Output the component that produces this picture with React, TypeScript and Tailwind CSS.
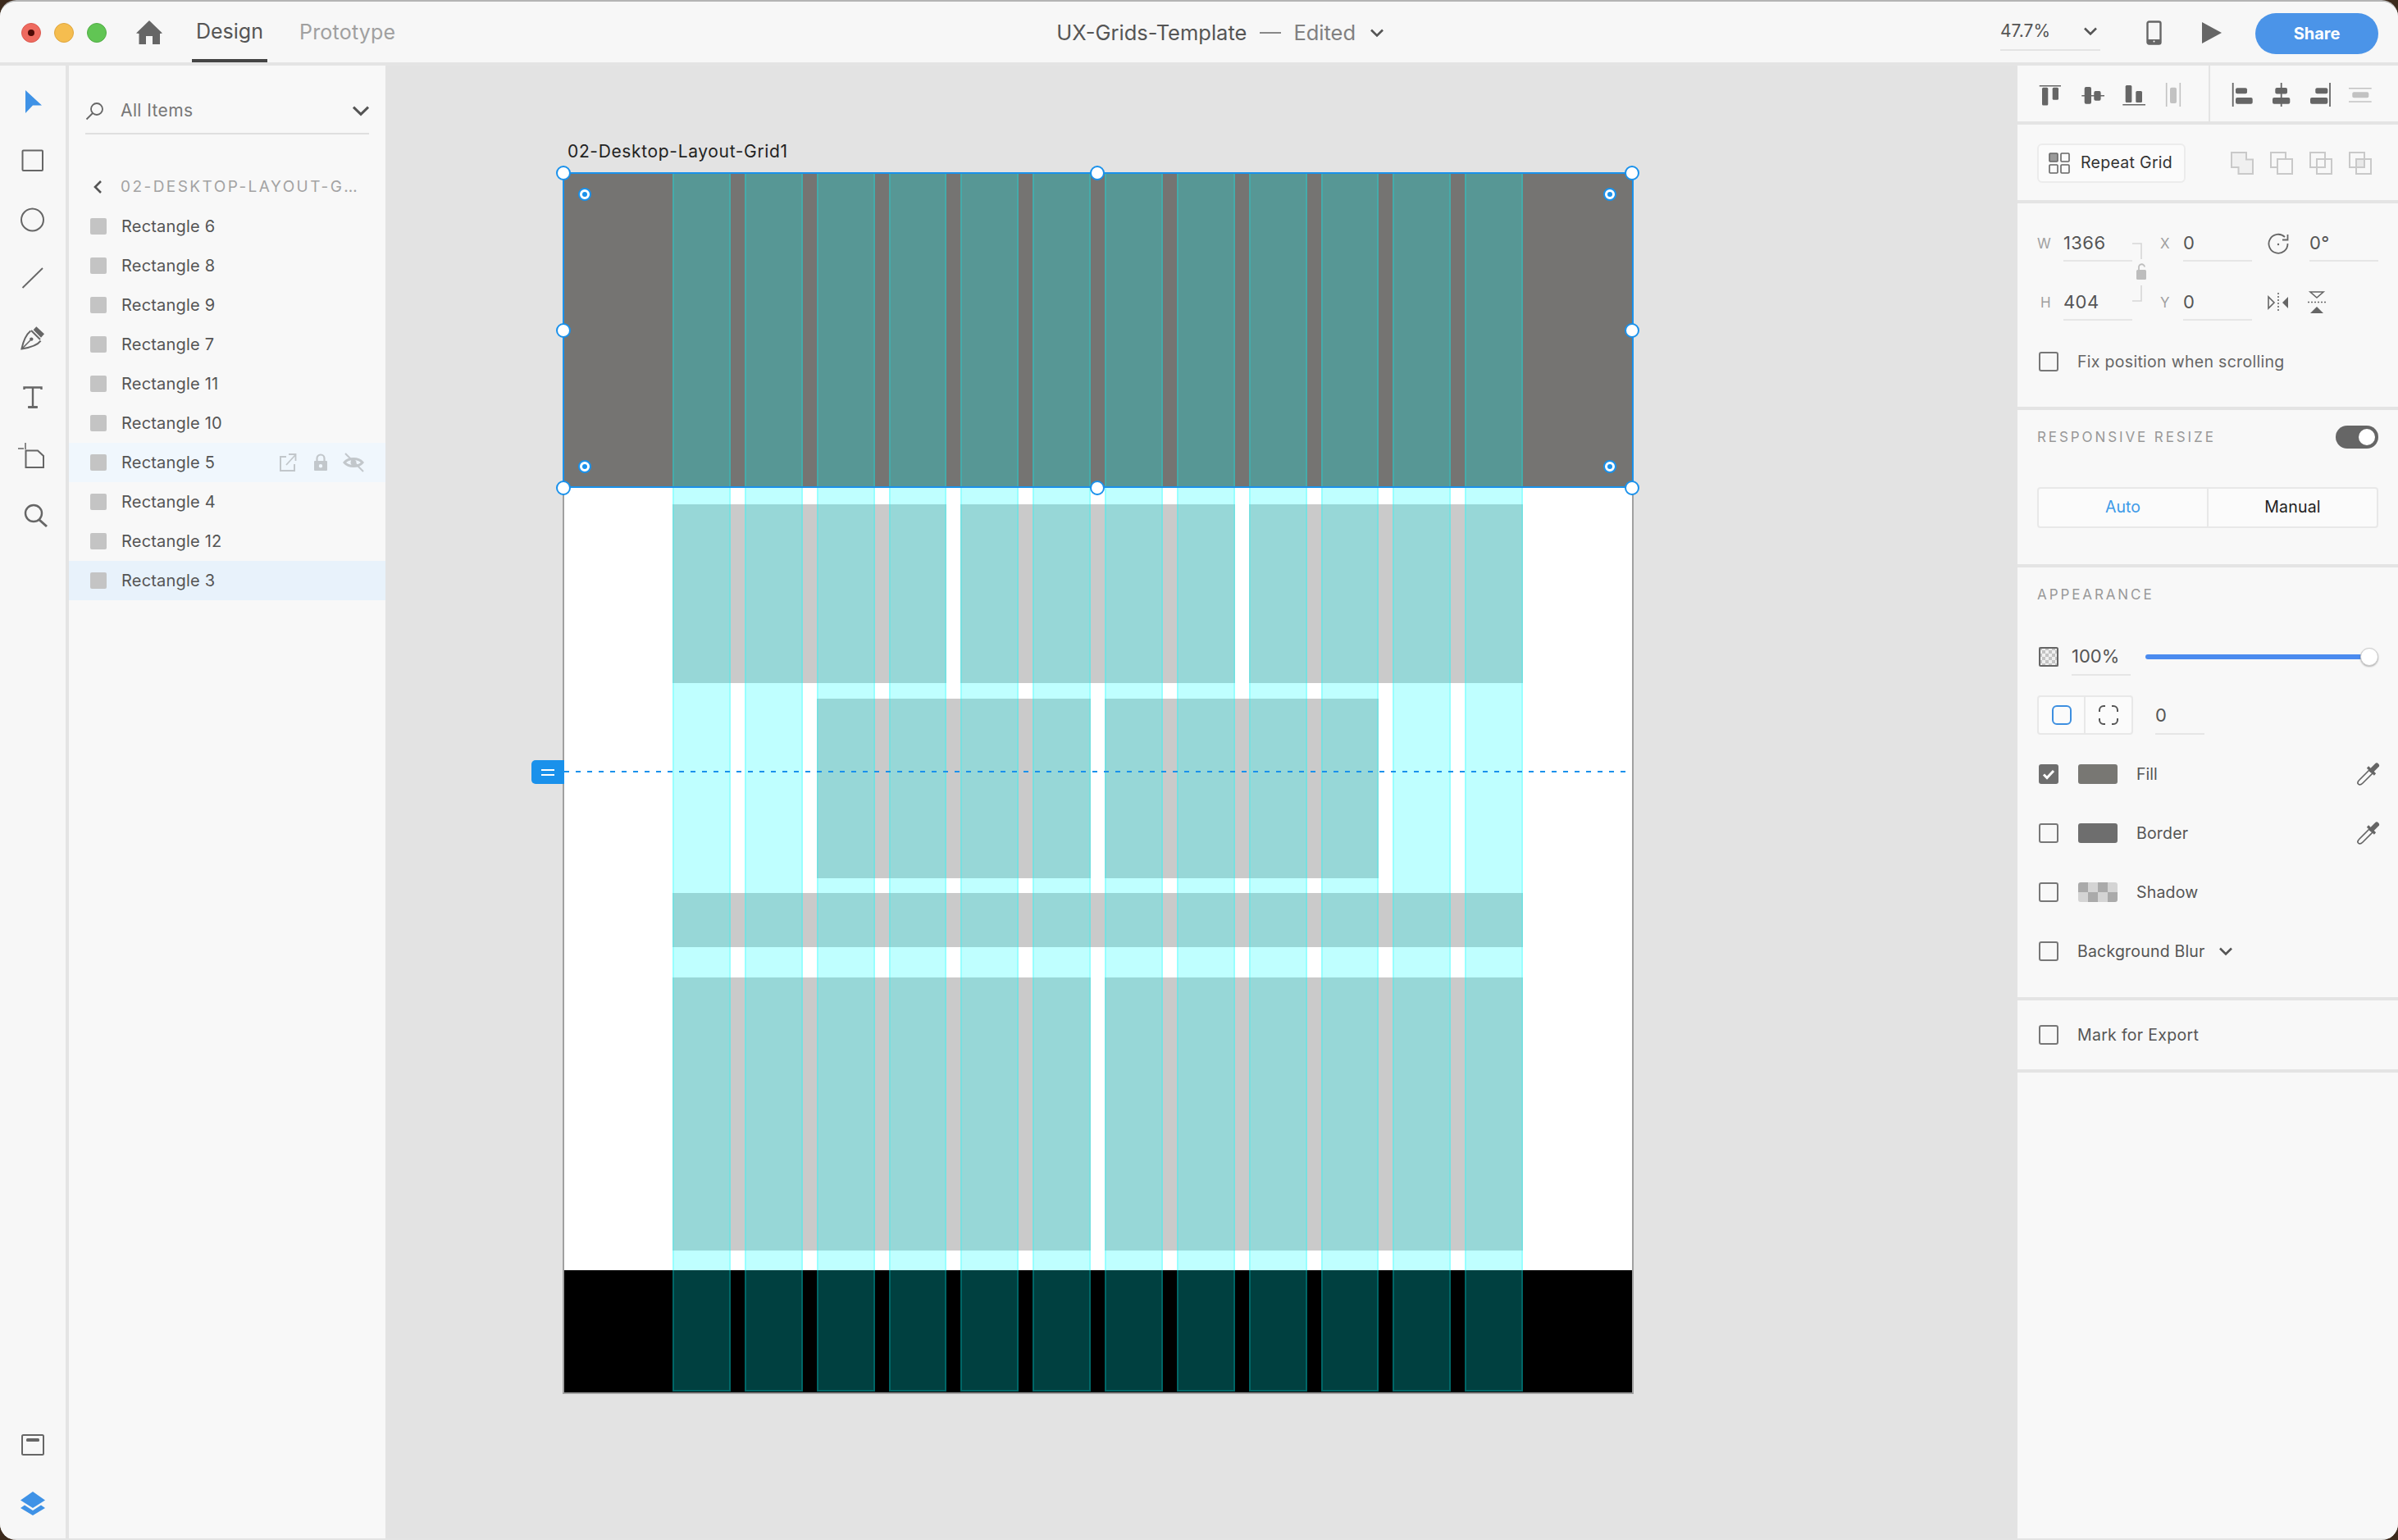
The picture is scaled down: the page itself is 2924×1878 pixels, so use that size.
import React from "react";

const GRAY = "#666666";
const layers = ["Rectangle 6","Rectangle 8","Rectangle 9","Rectangle 7","Rectangle 11","Rectangle 10","Rectangle 5","Rectangle 4","Rectangle 12","Rectangle 3"];

function Ic({ w = 40, h = 40, children, className = "" }: { w?: number; h?: number; children: React.ReactNode; className?: string }) {
  return <svg width={w} height={h} viewBox={`0 0 ${w} ${h}`} fill="none" className={"shrink-0 overflow-visible " + className}>{children}</svg>;
}

function Chevron({ size = 16, sw = 2.6, color = "#666" }: { size?: number; sw?: number; color?: string }) {
  return <Ic w={size} h={size}><path d={`M1 ${size * 0.28}L${size / 2} ${size * 0.72}L${size - 1} ${size * 0.28}`} stroke={color} strokeWidth={sw} /></Ic>;
}

function Tools() {
  const s = "#666";
  return (
    <div className="w-[80px] bg-[#f7f7f7] flex flex-col pt-[8px] shrink-0">
      <div className="h-[72px] flex items-center justify-center">
        <Ic><path d="M11 6V34L20 24.5L31 24.5Z" fill="#3f92e6" /></Ic>
      </div>
      <div className="h-[72px] flex items-center justify-center">
        <Ic><rect x="7.5" y="7.5" width="24.5" height="24.5" rx="1" stroke={s} strokeWidth="2" /></Ic>
      </div>
      <div className="h-[72px] flex items-center justify-center">
        <Ic><circle cx="19.5" cy="20" r="13.5" stroke={s} strokeWidth="2" /></Ic>
      </div>
      <div className="h-[72px] flex items-center justify-center">
        <Ic><path d="M7.5 31L32 7" stroke={s} strokeWidth="1.8" /></Ic>
      </div>
      <div className="h-[72px] flex items-center justify-center">
        <Ic>
          <path d="M24.3 6.3L34 15.3L30 19.7L20.7 10.3Z" fill={s} />
          <path d="M17.3 11.6C12 16 8 26 6.4 33.4C13 32.4 25 30 29.6 23.6" stroke={s} strokeWidth="2" />
          <path d="M7 33L17 23" stroke={s} strokeWidth="1.6" />
          <circle cx="18.3" cy="21.6" r="2.2" fill={s} />
          <path d="M18 11L29 22" stroke={s} strokeWidth="2" />
        </Ic>
      </div>
      <div className="h-[72px] flex items-center justify-center">
        <Ic>
          <path d="M9.5 11V8.5H30.5V11M20 8.5V32M15 32.5H25" stroke={s} strokeWidth="2.4" />
          <path d="M14 32.5H26" stroke={s} strokeWidth="2.6" />
        </Ic>
      </div>
      <div className="h-[72px] flex items-center justify-center">
        <Ic>
          <path d="M11.5 13.5H26L33 20V34H11.5Z" stroke={s} strokeWidth="2" />
          <path d="M11 4V12M2 11H9" stroke={s} strokeWidth="1.5" />
        </Ic>
      </div>
      <div className="h-[72px] flex items-center justify-center">
        <Ic>
          <circle cx="21" cy="18" r="10" stroke={s} strokeWidth="2.4" />
          <path d="M28 26L37 34" stroke={s} strokeWidth="3" />
        </Ic>
      </div>
      <div className="mt-auto flex flex-col items-center pb-[22px]">
        <Ic>
          <rect x="7" y="7" width="26" height="24" rx="1.5" stroke={s} strokeWidth="2" />
          <rect x="12" y="11" width="16" height="4" rx="1.5" fill={s} />
        </Ic>
        <div className="h-[31px]" />
        <Ic>
          <path d="M20 5L35 15.5L20 25L5 15.5Z" fill="#3f92e6" />
          <path d="M10 21.5L20 28L30 21.5L35 25L20 34L5 25Z" fill="#3f92e6" />
        </Ic>
      </div>
    </div>
  );
}

function LayersPanel() {
  return (
    <div className="w-[386px] bg-[#f8f8f8] shrink-0 ml-[4px]">
      <div className="mx-[20px] h-[84px] border-b-2 border-[#dfdfdf] flex items-center pt-[34px] pb-[6px]">
        <Ic w={24} h={24}>
          <circle cx="14" cy="10" r="7" stroke={GRAY} strokeWidth="1.8" />
          <path d="M9 15L1.5 22.5" stroke={GRAY} strokeWidth="1.8" />
        </Ic>
        <span className="ml-[19px] text-[21px] text-[#777] flex-1 tracking-[0.4px]">All Items</span>
        <Chevron size={20} sw={3} color="#555" />
      </div>
      <div className="h-[88px] pt-[43px] flex items-start">
        <div className="ml-[29px] h-[42px] flex items-center">
          <Ic w={12} h={18}><path d="M10 2L3 9L10 16" stroke="#555" strokeWidth="2.6" /></Ic>
        </div>
        <div className="ml-[22px] h-[42px] flex items-center text-[19px] tracking-[2.45px] text-[#a3a3a3] whitespace-nowrap">02-DESKTOP-LAYOUT-G…</div>
      </div>
      <div>
        {layers.map((n) => {
          const hov = n === "Rectangle 5";
          const sel = n === "Rectangle 3";
          return (
            <div key={n} className={"h-[48px] flex items-center pl-[26px] pr-[26px] " + (hov ? "bg-[#f0f7fd]" : sel ? "bg-[#e8f2fb]" : "")}>
              <div className="w-[20px] h-[20px] rounded-[2px] bg-[#c4c4c4]" />
              <span className="ml-[18px] text-[20px] text-[#555] tracking-[0.2px] flex-1 mt-[-1px]">{n}</span>
              {hov && (
                <div className="flex items-center">
                  <Ic w={22} h={24}>
                    <path d="M9 5H2V22H19V14" stroke="#c2c7cb" strokeWidth="2" />
                    <path d="M9 15L20 3M12 2H20.5V10" stroke="#c2c7cb" strokeWidth="1.8" />
                  </Ic>
                  <Ic w={18} h={24} className="ml-[20px]">
                    <path d="M4.5 10V7a4.5 4.5 0 0 1 9 0v3" stroke="#c2c7cb" strokeWidth="2.2" />
                    <path fillRule="evenodd" d="M2 10H16a1 1 0 0 1 1 1V21a1 1 0 0 1-1 1H2a1 1 0 0 1-1-1V11a1 1 0 0 1 1-1ZM9 14a2.2 2.2 0 1 0 0 4.4a2.2 2.2 0 0 0 0-4.4Z" fill="#c2c7cb" />
                  </Ic>
                  <Ic w={26} h={24} className="ml-[18px]">
                    <path d="M2 12C7 6 19 6 24 12C19 18 7 18 2 12Z" stroke="#c2c7cb" strokeWidth="3" />
                    <circle cx="13" cy="12" r="3.5" fill="#c2c7cb" />
                    <path d="M3 1L25 23" stroke="#c2c7cb" strokeWidth="2" />
                  </Ic>
                </div>
              )}
            </div>
          );
        })}
      </div>
    </div>
  );
}

function Handle({ className }: { className: string }) {
  return <div className={"absolute w-[18px] h-[18px] -ml-[9px] -mt-[9px] rounded-full bg-white border-2 border-[#1a91eb] " + className} />;
}
function Radius({ className }: { className: string }) {
  return (
    <div className={"absolute w-[16px] h-[16px] -ml-[8px] -mt-[8px] rounded-full bg-white border-2 border-[#1a91eb] flex items-center justify-center " + className}>
      <div className="w-[6px] h-[6px] rounded-full bg-[#1a91eb]" />
    </div>
  );
}

function Band({ className, children }: { className: string; children: React.ReactNode }) {
  return <div className={"absolute left-[134px] w-[1037px] grid grid-cols-12 gap-x-[17px] " + className}>{children}</div>;
}

function Canvas() {
  const g = "bg-[#cacaca]";
  return (
    <div className="flex-1 relative bg-[#e3e3e3] overflow-hidden">
      <div className="absolute left-[222px] top-[91px] text-[21px] leading-[28px] text-[#222] tracking-[0.65px] whitespace-nowrap">02-Desktop-Layout-Grid1</div>
      <div className="absolute left-[216px] top-[130px] w-[1306px] h-[1490px] bg-white">
        <div className="absolute left-0 right-0 top-0 h-[385px] bg-[#757472]" />
        <div className="absolute left-0 right-0 top-[1339px] bottom-0 bg-black" />
        <Band className="top-[405px] h-[218px]">
          <div className={"col-start-1 col-span-4 " + g} />
          <div className={"col-start-5 col-span-4 " + g} />
          <div className={"col-start-9 col-span-4 " + g} />
        </Band>
        <Band className="top-[642px] h-[219px]">
          <div className={"col-start-3 col-span-4 " + g} />
          <div className={"col-start-7 col-span-4 " + g} />
        </Band>
        <Band className="top-[879px] h-[66px]">
          <div className={"col-span-12 " + g} />
        </Band>
        <Band className="top-[982px] h-[333px]">
          <div className={"col-span-6 " + g} />
          <div className={"col-span-6 " + g} />
        </Band>
        <Band className="top-0 bottom-[3px]">
          {Array.from({ length: 12 }).map((_, i) => (
            <div key={i} className="bg-[rgba(0,255,255,0.25)] border-x-2 border-b-2 border-[rgba(0,255,255,0.2)]" />
          ))}
        </Band>
        <div className="absolute inset-0 border-2 border-[#a0a0a0]" />
        <div className="absolute left-0 top-0 w-[1306px] h-[385px] border-2 border-[#1a91eb]" />
        <div className="absolute left-[2px] right-[6px] top-[730px] h-[2px] bg-[repeating-linear-gradient(90deg,#1a91eb_0_6px,transparent_6px_14px)]" />
        <div className="absolute left-[-38px] top-[717px] w-[40px] h-[29px] bg-[#1a91eb] rounded-l-[5px] flex flex-col items-center justify-center gap-[4px]">
          <div className="w-[16px] h-[2px] bg-white" />
          <div className="w-[16px] h-[2px] bg-white" />
        </div>
        <Handle className="left-[1px] top-[1px]" />
        <Handle className="left-[652px] top-[1px]" />
        <Handle className="left-[1304px] top-[1px]" />
        <Handle className="left-[1px] top-[193px]" />
        <Handle className="left-[1304px] top-[193px]" />
        <Handle className="left-[1px] top-[385px]" />
        <Handle className="left-[652px] top-[385px]" />
        <Handle className="left-[1304px] top-[385px]" />
        <Radius className="left-[27px] top-[27px]" />
        <Radius className="left-[1277px] top-[27px]" />
        <Radius className="left-[27px] top-[359px]" />
        <Radius className="left-[1277px] top-[359px]" />
      </div>
    </div>
  );
}

function Check({ checked }: { checked?: boolean }) {
  if (checked)
    return (
      <div className="w-[24px] h-[24px] rounded-[3px] bg-[#6e6e6e] flex items-center justify-center shrink-0">
        <Ic w={16} h={14}><path d="M2 7.5L6 11.5L14 3" stroke="#fff" strokeWidth="3" /></Ic>
      </div>
    );
  return <div className="w-[24px] h-[24px] rounded-[3px] border-2 border-[#777] shrink-0" />;
}

function Dropper() {
  return (
    <Ic w={30} h={30}>
      <path d="M17 10L5 22C3 24 2.5 26 3.5 27C5 28.5 7 28 9 26L21 14" stroke="#666" strokeWidth="1.7" />
      <path d="M15 6.5L24 15.5" stroke="#666" strokeWidth="3.2" />
      <path d="M20 10.5L26 4.5" stroke="#666" strokeWidth="6" strokeLinecap="round" />
    </Ic>
  );
}

function Field({ value, w = 84, className = "" }: { value: string; w?: number; className?: string }) {
  return (
    <div style={{ width: w }} className={"h-[44px] border-b-2 border-[#e6e6e6] text-[22px] text-[#555] leading-[42px] tracking-[0.4px] " + className}>{value}</div>
  );
}

function BoolIcon({ kind }: { kind: number }) {
  const c = "#c9c9c9";
  return (
    <Ic w={28} h={28}>
      {kind === 0 && <path d="M1 1H19V9.5H27V27H9.5V19H1Z" stroke={c} strokeWidth="2" fill="#f0f0f0" />}
      {kind === 1 && <><path d="M9 19H1V1H19V9" stroke={c} strokeWidth="2" /><rect x="9" y="9" width="18" height="18" stroke={c} strokeWidth="2" /></>}
      {kind === 2 && <><rect x="1" y="1" width="18" height="18" stroke={c} strokeWidth="2" /><rect x="9" y="9" width="18" height="18" stroke={c} strokeWidth="2" /></>}
      {kind === 3 && <><rect x="1" y="1" width="18" height="18" stroke={c} strokeWidth="2" /><rect x="9" y="9" width="18" height="18" stroke={c} strokeWidth="2" /><rect x="10" y="10" width="8" height="8" fill="#e8e8e8" /></>}
    </Ic>
  );
}

function Checker({ w, h, cell, a, b }: { w: number; h: number; cell: number; a: string; b: string }) {
  const cells: React.ReactNode[] = [];
  for (let y = 0; y < h / cell; y++)
    for (let x = 0; x < w / cell; x++)
      cells.push(<rect key={x + "-" + y} x={x * cell} y={y * cell} width={cell} height={cell} fill={(x + y) % 2 ? b : a} />);
  return <>{cells}</>;
}

function RightPanel() {
  const s = "#666";
  const lc = "#c2c2c2";
  return (
    <div className="w-[464px] flex flex-col shrink-0 gap-[4px]">
      <div className="h-[68px] bg-[#f8f8f8] flex">
        <div className="w-[235px] border-r-2 border-[#e4e4e4] flex items-center pl-[25px] gap-[18px]">
          <Ic w={32} h={32}>
            <path d="M1.7 6.7H28" stroke={s} strokeWidth="1.6" />
            <rect x="5" y="8.7" width="7.3" height="21.7" rx="1.5" fill={s} />
            <rect x="17.7" y="8.7" width="7.3" height="15" rx="1.5" fill={s} />
          </Ic>
          <Ic w={32} h={32}>
            <path d="M3.3 18.7H31" stroke={s} strokeWidth="1.6" />
            <rect x="6.7" y="8" width="8.3" height="20.7" rx="2" fill={s} />
            <rect x="18.3" y="13" width="8.3" height="11.7" rx="2" fill={s} />
          </Ic>
          <Ic w={32} h={32}>
            <path d="M3.3 29.7H31" stroke={s} strokeWidth="1.6" />
            <rect x="6.7" y="6" width="7.7" height="21" rx="1.5" fill={s} />
            <rect x="19.3" y="13" width="7.7" height="14" rx="1.5" fill={s} />
          </Ic>
          <Ic w={32} h={32}>
            <path d="M6.7 3V32M23.3 3V32" stroke={lc} strokeWidth="1.6" />
            <rect x="11" y="8.7" width="8" height="19.3" rx="2" fill={lc} />
          </Ic>
        </div>
        <div className="flex-1 flex items-center pl-[25px] gap-[16px]">
          <Ic w={32} h={32}>
            <path d="M2.7 3V32" stroke={s} strokeWidth="1.8" />
            <rect x="6" y="9.3" width="14" height="7" rx="2" fill={s} />
            <rect x="6" y="21" width="20.7" height="7.7" rx="2" fill={s} />
          </Ic>
          <Ic w={32} h={32}>
            <path d="M13.7 3V32" stroke={s} strokeWidth="1.8" />
            <rect x="6.3" y="9" width="14.7" height="7.5" rx="2" fill={s} />
            <rect x="3" y="21" width="21.3" height="7.7" rx="2" fill={s} />
          </Ic>
          <Ic w={32} h={32}>
            <path d="M25 3V32" stroke={s} strokeWidth="1.8" />
            <rect x="7.3" y="9.3" width="15" height="7" rx="2" fill={s} />
            <rect x="1" y="21" width="21.3" height="7.7" rx="2" fill={s} />
          </Ic>
          <Ic w={32} h={32}>
            <path d="M0 9.7H27.7M0 26H27.7" stroke={lc} strokeWidth="1.6" />
            <rect x="4.3" y="14.3" width="20" height="7" rx="2" fill={lc} />
          </Ic>
        </div>
      </div>

      <div className="h-[92px] bg-[#f8f8f8] flex items-center pl-[24px]">
        <div className="w-[181px] h-[48px] rounded-[6px] border-2 border-[#ececec] bg-[#fbfbfb] flex items-center pl-[12px] mt-[2px]">
          <Ic w={26} h={26}>
            <rect x="1" y="1" width="10" height="10" rx="1" fill="#999" stroke="#666" strokeWidth="1.6" />
            <rect x="15" y="1" width="10" height="10" rx="1" stroke="#666" strokeWidth="1.6" />
            <rect x="1" y="15" width="10" height="10" rx="1" stroke="#666" strokeWidth="1.6" />
            <rect x="15" y="15" width="10" height="10" rx="1" stroke="#666" strokeWidth="1.6" />
          </Ic>
          <span className="ml-[13px] text-[19.5px] text-[#333] tracking-[0.3px] whitespace-nowrap">Repeat Grid</span>
        </div>
        <div className="ml-[55px] flex gap-[20px] mt-[2px]">
          <BoolIcon kind={0} /><BoolIcon kind={1} /><BoolIcon kind={2} /><BoolIcon kind={3} />
        </div>
      </div>

      <div className="h-[248px] bg-[#f8f8f8] pl-[24px] pt-[27px] relative">
        <div className="flex items-center h-[44px]">
          <span className="w-[32px] text-[17px] text-[#a0a0a0] mt-[2px]">W</span>
          <Field value="1366" />
          <span className="ml-[34px] w-[28px] text-[17px] text-[#a0a0a0] mt-[2px]">X</span>
          <Field value="0" />
          <div className="w-[70px] pl-[19px]">
            <Ic w={26} h={26}>
              <path d="M21 5A11.5 11.5 0 1 0 24.5 13" stroke={s} strokeWidth="1.8" />
              <path d="M24.5 2V8.5H18" stroke={s} strokeWidth="1.8" />
              <circle cx="13" cy="14" r="1.2" fill={s} />
            </Ic>
          </div>
          <Field value="0°" />
        </div>
        <div className="flex items-center h-[44px] mt-[28px]">
          <span className="w-[32px] text-[17px] text-[#a0a0a0] pl-[4px] mt-[2px]">H</span>
          <Field value="404" />
          <span className="ml-[34px] w-[28px] text-[17px] text-[#a0a0a0] mt-[2px]">Y</span>
          <Field value="0" />
          <div className="w-[70px] pl-[18px] flex gap-0 items-center">
            <Ic w={28} h={28}>
              <path d="M2 7V21L9 14Z" stroke={s} strokeWidth="1.6" />
              <path d="M26 7V21L19 14Z" fill={s} />
              <path d="M14 2V26" stroke={s} strokeWidth="1.6" strokeDasharray="2 2" />
            </Ic>
          </div>
          <div className="ml-[-3px]">
            <Ic w={24} h={28}>
              <path d="M4 1H20L12 8Z" stroke={s} strokeWidth="1.6" />
              <path d="M4 27H20L12 19Z" fill={s} />
              <path d="M1 13.5H23" stroke={s} strokeWidth="1.6" strokeDasharray="2 2" />
            </Ic>
          </div>
        </div>
        <div className="absolute left-[140px] top-[48px]">
          <Ic w={18} h={72}>
            <path d="M0 1H11V20" stroke="#d6d6d6" strokeWidth="1.6" />
            <path d="M11 52V71H0" stroke="#d6d6d6" strokeWidth="1.6" />
            <path d="M8 33V30a3.5 3.5 0 0 1 7-0.5" stroke="#bdbdbd" strokeWidth="1.8" />
            <rect x="5" y="33" width="12" height="12" rx="1.5" fill="#bdbdbd" />
          </Ic>
        </div>
        <div className="flex items-center mt-[38px] h-[24px] pl-[2px]">
          <Check />
          <span className="ml-[23px] text-[19.5px] text-[#666] tracking-[0.3px] whitespace-nowrap mt-[1px]">Fix position when scrolling</span>
        </div>
      </div>

      <div className="h-[188px] bg-[#f8f8f8] px-[24px]">
        <div className="flex items-center justify-between h-[66px]">
          <span className="text-[17px] tracking-[2.9px] text-[#999] whitespace-nowrap mt-[2px]">RESPONSIVE RESIZE</span>
          <div className="relative w-[52px] h-[28px] rounded-full bg-[#666]">
            <div className="absolute right-[4px] top-[4px] w-[20px] h-[20px] rounded-full bg-white" />
          </div>
        </div>
        <div className="mt-[28px] h-[50px] rounded-[4px] border-2 border-[#e8e8e8] bg-[#fbfbfb] flex text-[19.5px]">
          <div className="w-[207px] border-r-2 border-[#e8e8e8] flex items-center justify-center text-[#3d9ae8]">Auto</div>
          <div className="flex-1 flex items-center justify-center text-[#222] tracking-[0.2px]">Manual</div>
        </div>
      </div>

      <div className="h-[524px] bg-[#f8f8f8] pl-[24px] pr-[24px]">
        <div className="h-[66px] pt-[2px] flex items-center text-[17px] tracking-[2.9px] text-[#999]">APPEARANCE</div>
        <div className="flex items-center h-[46px] mt-[20px]">
          <div className="ml-[2px] w-[24px] h-[24px]">
            <Ic w={24} h={24}>
              <Checker w={24} h={24} cell={4} a="#c4c4c4" b="#f0f0f0" />
              <rect x="1" y="1" width="22" height="22" rx="1.5" stroke="#666" strokeWidth="2" />
            </Ic>
          </div>
          <div className="ml-[16px] w-[72px] h-[46px] border-b-2 border-[#e6e6e6] text-[22px] leading-[44px] text-[#555]">100%</div>
          <div className="ml-[18px] w-[264px] h-[6px] rounded-full bg-[#4b8bef] relative">
            <div className="absolute right-[-20px] top-[-8px] w-[22px] h-[22px] rounded-full bg-white border border-[#ccc] shadow-[0_1px_2px_rgba(0,0,0,0.3)]" />
          </div>
        </div>
        <div className="flex items-start mt-[24px]">
          <div className="w-[117px] h-[48px] rounded-[4px] border-2 border-[#e8e8e8] bg-[#fbfbfb] flex">
            <div className="w-[57px] border-r-2 border-[#e8e8e8] flex items-center justify-center">
              <Ic w={24} h={24}><rect x="1" y="1" width="22" height="22" rx="5" stroke="#3d8fe0" strokeWidth="2" /></Ic>
            </div>
            <div className="flex-1 flex items-center justify-center">
              <Ic w={24} h={24}><path d="M1 8V6a5 5 0 0 1 5-5h2M16 1h2a5 5 0 0 1 5 5v2M23 16v2a5 5 0 0 1-5 5h-2M8 23H6a5 5 0 0 1-5-5v-2" stroke="#555" strokeWidth="2" /></Ic>
            </div>
          </div>
          <div className="ml-[27px] w-[60px] h-[48px] border-b-2 border-[#e6e6e6] text-[22px] leading-[48px] text-[#555]">0</div>
        </div>
        <div className="h-[72px] mt-[12px] flex items-center pl-[2px]">
          <Check checked />
          <div className="ml-[24px] w-[48px] h-[24px] rounded-[3px] bg-[#787773]" />
          <span className="ml-[23px] text-[19.5px] text-[#555] flex-1 mt-[1px]">Fill</span>
          <div className="mr-[-2px]"><Dropper /></div>
        </div>
        <div className="h-[72px] flex items-center pl-[2px]">
          <Check />
          <div className="ml-[24px] w-[48px] h-[24px] rounded-[3px] bg-[#6e6e6e]" />
          <span className="ml-[23px] text-[19.5px] text-[#555] flex-1 tracking-[0.2px] mt-[1px]">Border</span>
          <div className="mr-[-2px]"><Dropper /></div>
        </div>
        <div className="h-[72px] flex items-center pl-[2px]">
          <Check />
          <div className="ml-[24px] w-[48px] h-[24px] rounded-[3px] overflow-hidden">
            <Ic w={48} h={24}><Checker w={48} h={24} cell={12} a="#aaaaaa" b="#d4d4d4" /></Ic>
          </div>
          <span className="ml-[23px] text-[19.5px] text-[#555] tracking-[0.2px] mt-[1px]">Shadow</span>
        </div>
        <div className="h-[72px] flex items-center pl-[2px]">
          <Check />
          <span className="ml-[23px] text-[19.5px] text-[#555] tracking-[0.2px] mt-[1px]">Background Blur</span>
          <div className="ml-[17px]"><Chevron size={16} sw={2.6} color="#555" /></div>
        </div>
      </div>

      <div className="h-[84px] bg-[#f8f8f8] pl-[26px] flex items-center">
        <Check />
        <span className="ml-[23px] text-[19.5px] text-[#555] tracking-[0.3px] mt-[1px]">Mark for Export</span>
      </div>

      <div className="flex-1 bg-[#f8f8f8]" />
    </div>
  );
}

function TopBar() {
  return (
    <div className="h-[76px] pt-[4px] bg-[#f7f7f7] flex items-center shrink-0 relative">
      <div className="ml-[26px] flex gap-[16px] items-center">
        <div className="w-[24px] h-[24px] rounded-full bg-[#ee6a5f] border border-[#dc5a50] flex items-center justify-center">
          <div className="w-[8px] h-[8px] rounded-full bg-[#4e0a06]" />
        </div>
        <div className="w-[24px] h-[24px] rounded-full bg-[#f5bd4f] border border-[#dfa63e]" />
        <div className="w-[24px] h-[24px] rounded-full bg-[#61c554] border border-[#52ad46]" />
      </div>
      <div className="ml-[36px]">
        <Ic w={32} h={30}>
          <path d="M16 0L32 15.5L29 16V29H20V19H12V29H3.5V16L0 15.5Z" fill="#666" />
        </Ic>
      </div>
      <div className="ml-[36px] h-[72px] w-[92px] border-b-4 border-[#444] flex items-center justify-center text-[25px] text-[#555] pt-[2px]">Design</div>
      <div className="ml-[39px] text-[25px] text-[#a0a0a0] tracking-[0.2px]">Prototype</div>
      <div className="ml-[806px] flex items-center text-[25.5px]">
        <span className="text-[#555]">UX-Grids-Template</span>
        <span className="ml-[16px] w-[26px] h-[2px] bg-[#888]" />
        <span className="ml-[15px] text-[#808080]">Edited</span>
        <div className="ml-[18px]"><Chevron size={16} sw={2.6} color="#555" /></div>
      </div>
      <div className="ml-auto flex items-center pr-[24px]">
        <div className="w-[122px] h-[45px] mt-[-2px] border-b-2 border-[#e4e4e4] flex items-center text-[21px] text-[#555]">
          <span className="flex-1">47.7%</span>
          <div className="mr-[4px]"><Chevron size={16} sw={2.6} color="#555" /></div>
        </div>
        <div className="ml-[56px]">
          <Ic w={20} h={30}>
            <rect x="1.5" y="1.5" width="16" height="27" rx="2" stroke="#666" strokeWidth="2.4" />
            <rect x="1.5" y="23" width="16" height="5" fill="#666" />
            <circle cx="9.5" cy="25.5" r="1" fill="#fff" />
          </Ic>
        </div>
        <div className="ml-[48px]">
          <Ic w={24} h={26}><path d="M0 0L24 13L0 26Z" fill="#666" /></Ic>
        </div>
        <div className="ml-[41px] mt-[2px] w-[150px] h-[50px] rounded-full bg-[#4b94e8] flex items-center justify-center text-white font-bold text-[20px]">Share</div>
      </div>
    </div>
  );
}

export default function App() {
  return (
    <div className="w-[2924px] h-[1878px] bg-[#3c2a1c] overflow-hidden [font-family:Inter,sans-serif]">
      <div className="w-full h-full rounded-[20px] overflow-hidden bg-[#e4e4e4] flex flex-col border-t-2 border-[#b4b4b4]">
        <div className="-mt-[2px] flex flex-col h-full">
          <TopBar />
          <div className="flex-1 flex mt-[4px] min-h-0">
            <Tools />
            <LayersPanel />
            <Canvas />
            <RightPanel />
          </div>
        </div>
      </div>
    </div>
  );
}
